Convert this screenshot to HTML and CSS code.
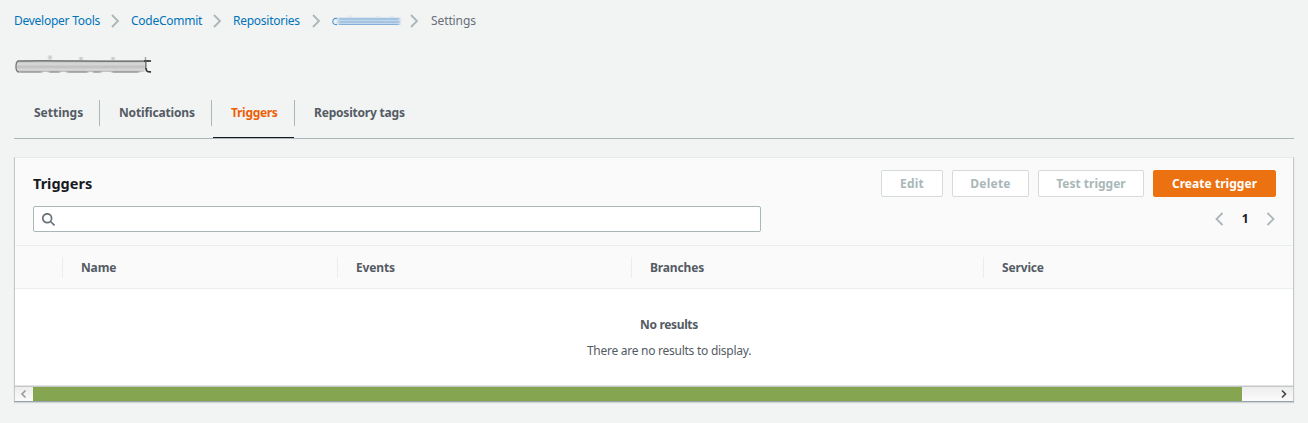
FILE: index.html
```html
<!DOCTYPE html>
<html lang="en">
<head>
<meta charset="utf-8">
<title>Triggers</title>
<link rel="stylesheet" href="styles.css">
</head>
<body>
<nav class="crumbs">
  <a class="crumb c-tools">Developer Tools</a>
  <svg class="chev" viewBox="0 0 9 14"><path d="M1 1 7 7 1 13"/></svg>
  <a class="crumb c-commit">CodeCommit</a>
  <svg class="chev" viewBox="0 0 9 14"><path d="M1 1 7 7 1 13"/></svg>
  <a class="crumb c-repos">Repositories</a>
  <svg class="chev" viewBox="0 0 9 14"><path d="M1 1 7 7 1 13"/></svg>
  <svg class="crumb-smudge" viewBox="0 0 70 14">
    <defs><filter id="soft" x="-10%" y="-50%" width="120%" height="200%"><feGaussianBlur stdDeviation="0.9 0.35"/></filter></defs>
    <g filter="url(#soft)">
      <rect x="5" y="3.5" width="63" height="7.5" fill="#c3d8eb"/>
      <path d="M7 5H67M7 8H68M7 10.500H67" stroke="#86afd8" stroke-width="1.200" fill="none"/>
      <path d="M18 1.500v2M46 2v1M60 2v1" stroke="#b4cde3"/>
    </g>
    <path d="M5 4.500C1.800 4 .8 5.600 .8 7.500s1 3.500 4.200 3" stroke="#4c93cd" stroke-width="1.100" fill="none"/>
  </svg>
  <svg class="chev" viewBox="0 0 9 14"><path d="M1 1 7 7 1 13"/></svg>
  <span class="crumb c-current">Settings</span>
</nav>
<svg class="title-smudge" viewBox="0 0 140 24">
  <defs>
    <filter id="smear" x="-5%" y="-30%" width="110%" height="160%"><feGaussianBlur stdDeviation="1.2 0.6"/></filter>
    <linearGradient id="band" x1="0" y1="0" x2="0" y2="1"><stop offset="0" stop-color="#b5b5b5"/><stop offset=".3" stop-color="#dadada"/><stop offset=".55" stop-color="#c0c0c0"/><stop offset=".8" stop-color="#d8d8d8"/><stop offset="1" stop-color="#bdbdbd"/></linearGradient>
  </defs>
  <g filter="url(#smear)">
    <rect x="2" y="6.500" width="130" height="11.500" rx="4" fill="url(#band)"/>
    <path d="M4 7C40 6 90 8 136 7" stroke="#777" stroke-width="1.300" fill="none"/>
    <path d="M5 18H28M35 18H46M53 18H74M79 18H87M98 18H125" stroke="#999" stroke-width="1.500"/>
    <path d="M36 1.500v4M67 3v3M99 3v3" stroke="#b0b0b0" stroke-width="2"/>
  </g>
  <path d="M5 6.800C1 7.300 1 17.500 5 18" stroke="#777" stroke-width="1.300" fill="none"/>
  <path d="M131.500 3v4" stroke="#999" stroke-width="1.300"/>
  <path d="M130 7h7M132 14c0 3 1 4 5 3.800" stroke="#333" stroke-width="1.700" fill="none"/>
  <path d="M131.800 7v7" stroke="#666" stroke-width="1.300"/>
</svg>
<div class="tabs">
  <div class="tab t-settings"><span>Settings</span></div>
  <div class="tab t-notif"><span>Notifications</span></div>
  <div class="tab t-triggers active"><span>Triggers</span></div>
  <div class="tab t-tags"><span>Repository tags</span></div>
</div>
<main class="panel">
  <header class="panel-head">
    <div class="title-row">
      <h2>Triggers</h2>
      <div class="actions">
        <button class="btn b-edit">Edit</button>
        <button class="btn b-delete">Delete</button>
        <button class="btn b-test">Test trigger</button>
        <button class="btn primary">Create trigger</button>
      </div>
    </div>
    <div class="filter-row">
      <div class="search"><svg viewBox="0 0 14 14"><circle cx="5.200" cy="5.200" r="4.400"/><path d="M8.500 8.500 12.500 12.300"/></svg></div>
      <div class="pager">
        <svg class="chev" viewBox="0 0 9 14"><path d="M7.500 1 1.500 7 7.500 13"/></svg>
        <span>1</span>
        <svg class="chev" viewBox="0 0 9 14"><path d="M1.500 1 7.500 7 1.500 13"/></svg>
      </div>
    </div>
  </header>
  <div class="columns">
    <div></div>
    <div class="col">Name</div>
    <div class="col">Events</div>
    <div class="col">Branches</div>
    <div class="col">Service</div>
  </div>
  <div class="empty"><strong>No results</strong><p>There are no results to display.</p></div>
  <div class="scrollbar">
    <svg class="arrow" viewBox="0 0 18 14"><path d="M10.500 3.500 7 7 10.500 10.500"/></svg>
    <div class="thumb"></div>
    <svg class="arrow right" viewBox="0 0 18 14"><path d="M7 3.500 10.500 7 7 10.500"/></svg>
  </div>
</main>
</body>
</html>
```
FILE: styles.css
```css
* { box-sizing: border-box; }
body {
  margin: 0;
  padding: 10px 14px 0;
  height: 423px;
  overflow: hidden;
  background: #f2f3f3;
  color: #545b64;
  font: 12px/20px "Noto Sans", sans-serif;
  letter-spacing: -.15px;
}
svg { display: block; flex: none; }
.crumbs { display: flex; align-items: center; height: 21px; letter-spacing: -.26px; }
.crumb { flex: none; color: #0073bb; white-space: nowrap; }
.c-tools { width: 97px; }
.chev { width: 9px; height: 14px; fill: none; stroke: #aab7b8; stroke-width: 1.8; }
.c-commit { width: 82px; margin-left: 11px; }
.c-repos { width: 79px; margin-left: 11px; }
.crumbs .crumb-smudge { width: 70px; height: 14px; margin: 0 8px 0 11px; }
.crumbs .c-current { margin-left: 12px; color: #687078; letter-spacing: -.1px; }
.title-smudge { width: 140px; height: 24px; margin-top: 23px; }
.tabs { display: flex; height: 61px; border-bottom: 1px solid #aab7b8; padding-top: 22px; }
.tab { position: relative; height: 26px; padding-left: 19px; border-right: 1px solid #aab7b8; line-height: 26px; font-weight: 700; white-space: nowrap; }
.t-settings { width: 86px; padding-left: 20px; letter-spacing: 0; }
.t-notif { width: 112px; }
.t-triggers { width: 83px; color: #eb5f07; letter-spacing: -.3px; }
.t-tags { border: 0; letter-spacing: -.2px; }
.active::after { content: ""; position: absolute; left: 1px; right: 0; bottom: -12px; height: 1px; background: #16191f; }
.panel { margin-top: 18px; height: 245px; border: 1px solid #c3c8c8; border-top-color: #e8eaea; border-bottom-color: #98a3a8; background: #fff; box-shadow: 0 1px 1px #d0d5d6; }
.panel-head { height: 88px; padding: 12px 17px 0 18px; background: #fafafa; border-bottom: 1px solid #eaeded; }
.title-row { display: flex; justify-content: space-between; height: 36px; }
h2 { margin: 0; color: #16191f; font-size: 14.5px; line-height: 26px; letter-spacing: 0; }
.actions { display: flex; gap: 9px; }
.btn { height: 27px; padding: 0; border: 1px solid #d5dbdb; border-radius: 2px; background: #fff; color: #aab7b8; font: 700 12px/25px "Noto Sans", sans-serif; letter-spacing: .25px; }
.b-edit { width: 62px; }
.b-delete { width: 77px; }
.b-test { width: 106px; letter-spacing: 0; }
.primary { width: 123px; border-color: #ec7211; background: #ec7211; color: #fff; letter-spacing: .05px; }
.filter-row { display: flex; justify-content: space-between; align-items: center; height: 26px; }
.search { width: 728px; height: 26px; padding: 6px 8px; border: 1px solid #aab7b8; border-radius: 2px; background: #fff; }
.search svg { width: 14px; height: 14px; fill: none; stroke: #687078; stroke-width: 1.7; }
.pager { display: flex; align-items: center; margin-right: 1px; color: #16191f; font-weight: 700; }
.pager span { width: 42px; text-align: center; }
.columns { display: grid; grid-template-columns: 47px 275px 294px 352px 1fr; align-items: center; height: 43px; background: #fafafa; border-bottom: 1px solid #eaeded; font-weight: 700; }
.col { height: 21px; padding-left: 18px; border-left: 1px solid #eaeded; line-height: 21px; }
.empty { height: 97px; padding-top: 26px; padding-left: 30px; border-bottom: 1px solid #e3e5e5; text-align: center; }
.empty strong, .empty p { display: block; margin: 0; }
.empty strong { letter-spacing: -.35px; }
.empty p { margin-top: 6px; letter-spacing: -.26px; }
.scrollbar { display: flex; height: 15px; border-top: 1px solid #c5c5c5; background: linear-gradient(#ededed, #fbfbfb); }
.arrow { width: 18px; height: 14px; fill: none; stroke: #999; stroke-width: 1.6; }
.right { margin-left: auto; stroke: #444; }
.thumb { width: 1209px; background: #86a550; }
```
